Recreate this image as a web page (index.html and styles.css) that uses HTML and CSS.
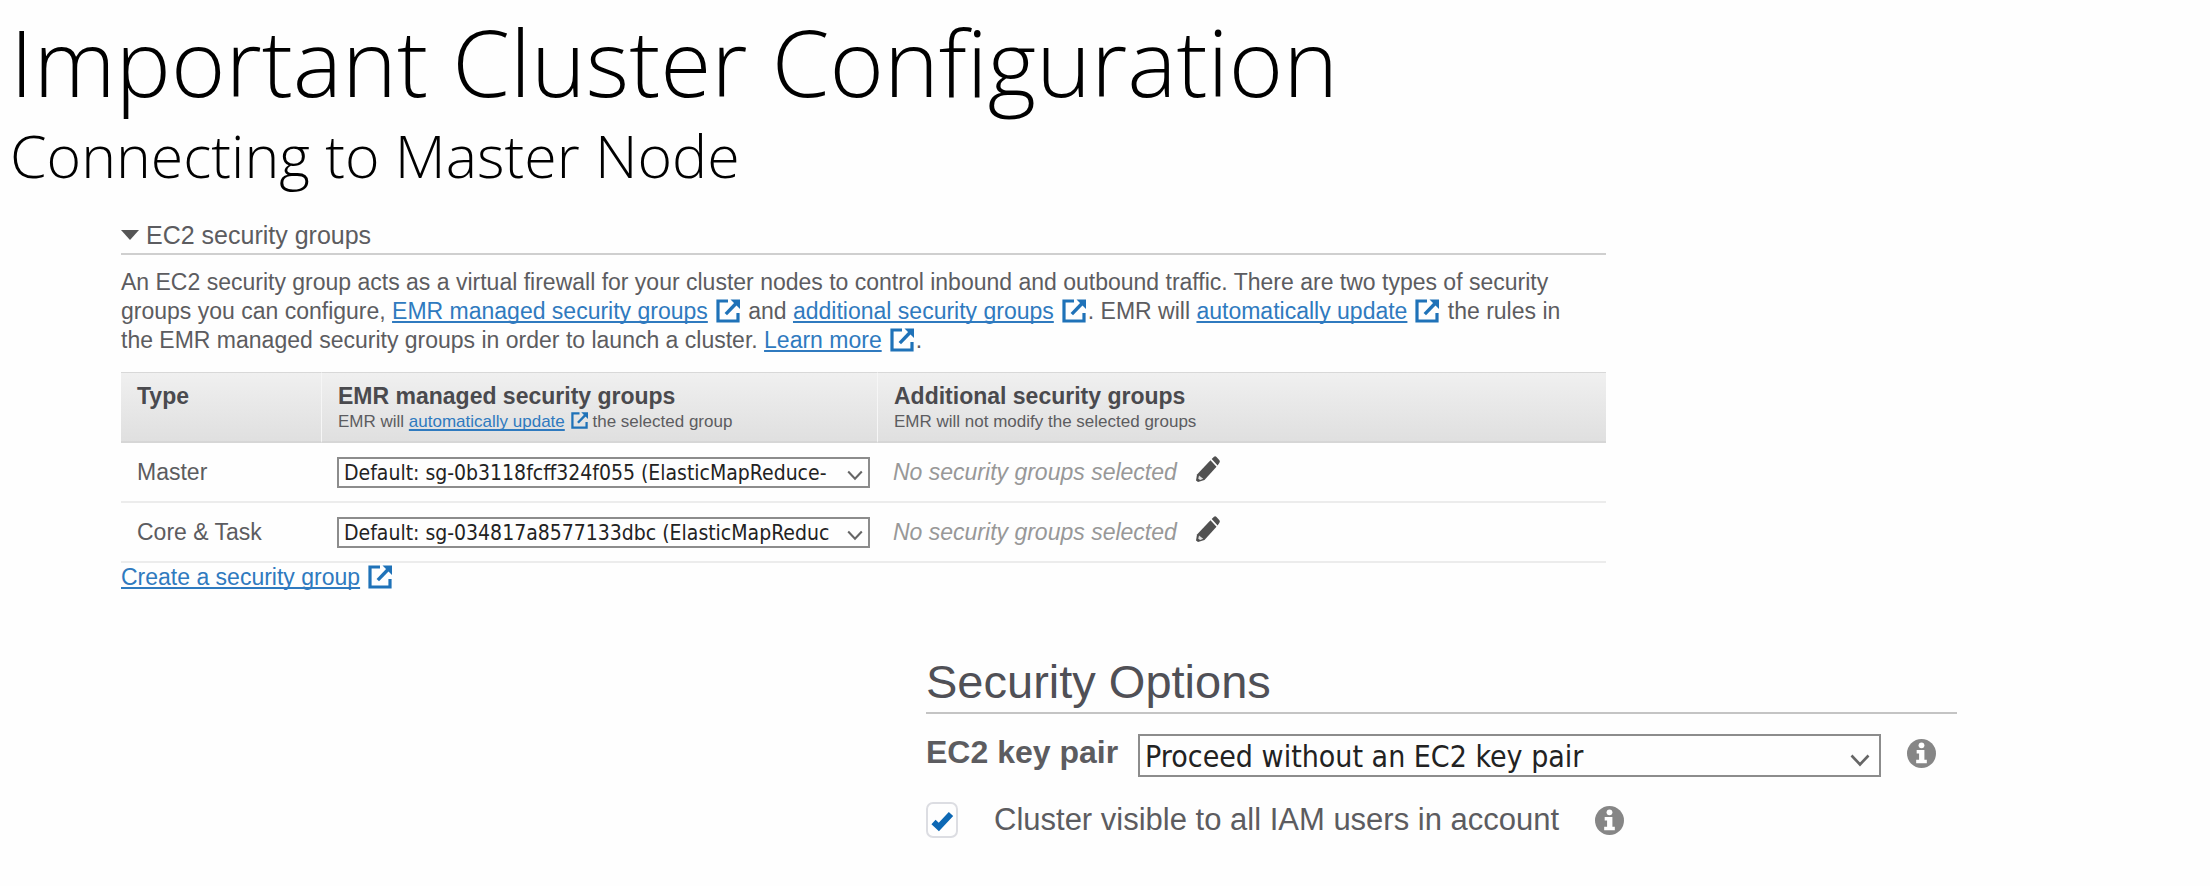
FILE: index.html
```
<!DOCTYPE html>
<html lang="en">
<head>
<meta charset="utf-8">
<title>Important Cluster Configuration</title>
<link rel="stylesheet" href="styles.css">
</head>
<body>
<svg class="sprite" aria-hidden="true">
  <symbol id="external" viewBox="0 0 24 24">
    <path d="M12 2H2V22H22V14" fill="none" stroke="currentColor" stroke-width="3.2"/>
    <path d="M14.500 0.500H24V10Z" fill="currentColor"/>
    <path d="M20.500 4L9.800 15.200" fill="none" stroke="currentColor" stroke-width="3.4"/>
  </symbol>
  <symbol id="pencil" viewBox="0 0 24 26">
    <path d="M14.500 4.300L20.500 10.700L8.500 24L2 26L0 24.500L1 18.500Z" fill="currentColor"/>
    <path d="M15.700 3L18 0.800Q19.200 -0.200 20.500 1L23.200 4Q24.400 5.400 23.400 6.700L21.600 9.400Z" fill="currentColor"/>
    <path d="M3 19.500L7.200 22.800L4.200 24L2.300 22.700Z" fill="#fff" opacity=".8"/>
  </symbol>
  <symbol id="info" viewBox="0 0 30 30">
    <circle cx="15" cy="15" r="15" fill="currentColor"/>
    <circle cx="15" cy="6.500" r="3" fill="#fff"/>
    <path d="M10 11.500H18V21.500H20.500V25H9.500V21.500H12.500V15H10Z" fill="#fff"/>
  </symbol>
  <symbol id="chevron" viewBox="0 0 20 13">
    <path d="M1.500 1.500L10 10.500L18.500 1.500" fill="none" stroke="currentColor" stroke-width="2.600"/>
  </symbol>
</svg>

<header class="slide-head">
  <h1 class="title">Important Cluster Configuration</h1>
  <p class="subtitle">Connecting to Master Node</p>
</header>

<main>
  <section class="groups">
    <h2 class="groups-title"><span class="caret"></span>EC2 security groups</h2>
    <p class="intro">An EC2 security group acts as a virtual firewall for your cluster nodes to control inbound and outbound traffic. There are two types of security groups you can configure, <a href="#">EMR managed security groups</a><svg class="ext"><use href="#external"/></svg> and <a href="#">additional security groups</a><svg class="ext"><use href="#external"/></svg>. EMR will <a href="#">automatically update</a><svg class="ext"><use href="#external"/></svg> the rules in the EMR managed security groups in order to launch a cluster. <a href="#">Learn more</a><svg class="ext"><use href="#external"/></svg>.</p>

    <table class="group-table">
      <thead>
        <tr>
          <th class="col-type" scope="col">Type</th>
          <th class="col-managed" scope="col">EMR managed security groups
            <small class="hint">EMR will <a href="#">automatically update</a><svg class="ext ext-small"><use href="#external"/></svg> the selected group</small></th>
          <th scope="col">Additional security groups
            <small class="hint">EMR will not modify the selected groups</small></th>
        </tr>
      </thead>
      <tbody>
        <tr>
          <td><label for="master">Master</label></td>
          <td>
            <div class="picker">
              <select id="master"><option>Default: sg-0b3118fcff324f055 (ElasticMapReduce-</option></select>
              <svg class="chevron"><use href="#chevron"/></svg>
            </div>
          </td>
          <td><div class="additional"><em>No security groups selected</em><button class="edit" type="button" aria-label="Edit"><svg><use href="#pencil"/></svg></button></div></td>
        </tr>
        <tr>
          <td><label for="core">Core &amp; Task</label></td>
          <td>
            <div class="picker">
              <select id="core"><option>Default: sg-034817a8577133dbc (ElasticMapReduc</option></select>
              <svg class="chevron"><use href="#chevron"/></svg>
            </div>
          </td>
          <td><div class="additional"><em>No security groups selected</em><button class="edit" type="button" aria-label="Edit"><svg><use href="#pencil"/></svg></button></div></td>
        </tr>
      </tbody>
    </table>
    <p class="create"><a href="#">Create a security group</a><svg class="ext"><use href="#external"/></svg></p>
  </section>

  <section class="options">
    <h2 class="options-title">Security Options</h2>
    <div class="key-row">
      <label class="key-label" for="key">EC2 key pair</label>
      <div class="picker picker-large">
        <select id="key"><option>Proceed without an EC2 key pair</option></select>
        <svg class="chevron"><use href="#chevron"/></svg>
      </div>
      <svg class="info"><use href="#info"/></svg>
    </div>
    <div class="visible-row">
      <span class="check">
        <input type="checkbox" id="visible" checked>
        <svg class="tick" viewBox="0 0 32 36"><path d="M7.500 20L12.800 25L25 12" fill="none" stroke="currentColor" stroke-width="6"/></svg>
      </span>
      <label for="visible">Cluster visible to all IAM users in account</label>
      <svg class="info"><use href="#info"/></svg>
    </div>
  </section>
</main>
</body>
</html>
```
FILE: styles.css
```
* {
  box-sizing: border-box;
}

body {
  margin: 0;
  background: #fefefe;
  color: #5c5c60;
  font: 23px/29px "Liberation Sans", Arial, sans-serif;
}

h1, h2, p {
  margin: 0;
  font-weight: 400;
}

a {
  color: #2f7abf;
  text-decoration: underline 2px;
  text-underline-offset: 2px;
  text-decoration-skip-ink: none;
}

.sprite {
  display: none;
}

/* Slide heading */
.slide-head {
  padding: 11px 12px 0 10px;
  color: #000;
  font-family: "Open Sans", sans-serif;
}

.title {
  font-size: 93px;
  font-weight: 300;
  line-height: 100px;
}

.subtitle {
  margin-top: 6px;
  font-size: 59px;
  font-weight: 300;
  line-height: 76px;
}

/* Security groups */
.groups {
  margin: 27px 604px 0 121px;
}

.groups-title {
  display: flex;
  align-items: center;
  gap: 7px;
  padding-bottom: 3px;
  border-bottom: 2px solid #cfcfcf;
  font-size: 25px;
  line-height: 30px;
}

.caret {
  border: 9px solid transparent;
  border-top: 10px solid #555;
  border-bottom: 0;
}

.intro {
  margin-top: 13px;
  padding-right: 24px;
}

.ext {
  width: 24px;
  height: 24px;
  margin: 0 2px 0 8px;
  vertical-align: -4px;
  color: #1f72b8;
}

.ext-small {
  width: 17px;
  height: 17px;
  margin: 0 0 0 6px;
  vertical-align: -2px;
}

.group-table {
  width: 100%;
  margin-top: 17px;
  border-collapse: separate;
  border-spacing: 0;
  table-layout: fixed;
}

.group-table thead tr {
  background: linear-gradient(#f0f0f0, #dfdfdf);
}

.group-table th {
  padding: 9px 16px;
  border-top: 1px solid #d8d8d8;
  border-bottom: 2px solid #d6d6d6;
  color: #4a4a4e;
  text-align: left;
  vertical-align: top;
}

.group-table th + th {
  border-left: 1px solid #f6f6f6;
}

.col-type {
  width: 200px;
}

.col-managed {
  width: 556px;
}

.hint {
  display: block;
  margin-top: 1px;
  color: #5c5c60;
  font-size: 17px;
  font-weight: 400;
  line-height: 20px;
}

.group-table td {
  height: 60px;
  padding: 0 7px 0 16px;
  border-bottom: 2px solid #ececec;
}

.picker {
  position: relative;
}

.picker select {
  display: block;
  width: 100%;
  height: 31px;
  padding: 2px 28px 0 5px;
  border: 2px solid #8c8c8c;
  border-radius: 0;
  background: #fefefe;
  color: #222;
  font: 21px "DejaVu Sans Condensed", "DejaVu Sans", sans-serif;
  appearance: none;
}

.chevron {
  position: absolute;
  top: 13px;
  right: 7px;
  width: 16px;
  height: 11px;
  color: #666;
  pointer-events: none;
}

.additional {
  display: flex;
  align-items: center;
  gap: 19px;
  color: #989898;
}

.edit {
  display: flex;
  margin-bottom: 7px;
  padding: 0;
  border: 0;
  background: none;
  color: #505050;
}

.edit svg {
  width: 24px;
  height: 26px;
}

/* Security options */
.options {
  margin: 63px 253px 0 926px;
}

.options-title {
  padding-bottom: 3px;
  border-bottom: 2px solid #c4c4c4;
  color: #505056;
  font-size: 47px;
  line-height: 54px;
}

.key-row {
  display: flex;
  margin: 20px 21px 0 0;
}

.key-label {
  margin-right: 20px;
  font-size: 32px;
  font-weight: 700;
  line-height: 36px;
}

.picker-large {
  flex: 1;
}

.picker-large select {
  height: 43px;
  font-size: 30px;
}

.picker-large .chevron {
  top: 20px;
  right: 11px;
  width: 20px;
  height: 13px;
}

.info {
  width: 29px;
  height: 29px;
  color: #868686;
}

.key-row .info {
  margin: 5px 0 0 26px;
}

.visible-row {
  display: flex;
  align-items: center;
  margin-top: 25px;
  font-size: 31px;
  line-height: 36px;
}

.visible-row .info {
  margin-left: 36px;
}

.check {
  position: relative;
  width: 32px;
  height: 36px;
  margin-right: 36px;
}

.check input {
  width: 32px;
  height: 36px;
  margin: 0;
  border: 2px solid #dcdde2;
  border-radius: 7px;
  appearance: none;
}

.tick {
  position: absolute;
  inset: 0;
  color: #0d68b4;
  pointer-events: none;
}
```
